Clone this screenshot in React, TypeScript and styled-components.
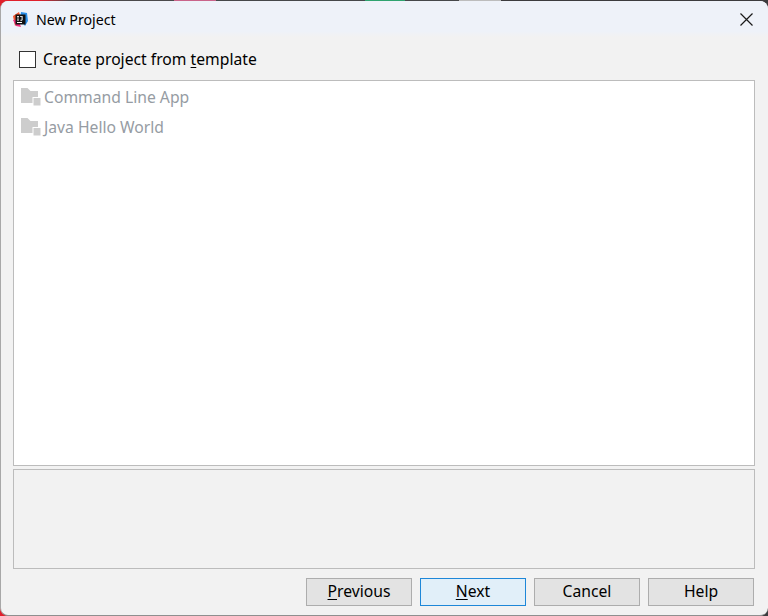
import { createGlobalStyle } from "styled-components";
import styled from "styled-components";

const Global = createGlobalStyle`
  html, body {
    margin: 0;
    padding: 0;
    background: #3a3a3c;
  }
`;

const Desktop = styled.div`
  width: 768px;
  height: 616px;
  overflow: hidden;
  background: linear-gradient(
    to right,
    #e0202c 0,
    #e0202c 40px,
    #4a4a4c 70px,
    #4a4a4c 174px,
    #c9648a 174px,
    #c9648a 216px,
    #46484a 216px,
    #46484a 365px,
    #2fa36f 365px,
    #2fa36f 405px,
    #46484a 405px,
    #46484a 459px,
    #bdbdbd 459px,
    #bdbdbd 501px,
    #3c3c3e 501px
  );
`;

const Window = styled.div`
  box-sizing: border-box;
  width: 768px;
  height: 615px;
  margin-top: 1px;
  background: #f2f2f2;
  border-left: 1px solid #a8a8a8;
  border-bottom: 1px solid #8f8f8f;
  border-radius: 8px;
  display: flex;
  flex-direction: column;
  overflow: hidden;
  font-family: "Noto Sans", "Open Sans", sans-serif;
  color: #000;
`;

const TitleBar = styled.div`
  height: 36px;
  flex: none;
  display: flex;
  align-items: center;
  padding: 0 15px 1px 11px;
  background: linear-gradient(to bottom, #eef2f9 0, #eef2f9 30px, #f2f2f2 36px);
`;

const Title = styled.span`
  margin-left: 7px;
  font-size: 14.2px;
  flex: 1;
`;

const Body = styled.div`
  flex: 1;
  display: flex;
  flex-direction: column;
  padding: 0 13px 9px 12px;
`;

const TemplateRow = styled.label`
  height: 42px;
  flex: none;
  display: flex;
  align-items: center;
  padding-left: 6px;
  box-sizing: border-box;
  gap: 7px;
  font-size: 15.7px;
`;

const Box = styled.span`
  box-sizing: border-box;
  width: 17px;
  height: 17px;
  border: 1px solid #333;
  background: #fff;
`;

const Mnemonic = styled.span`
  text-decoration: underline;
  text-underline-offset: 2px;
  text-decoration-thickness: 1px;
`;

const TemplateList = styled.div`
  box-sizing: border-box;
  height: 386px;
  flex: none;
  background: #fff;
  border: 1px solid #bcbcbc;
  padding: 1px 7px;
`;

const TemplateItem = styled.div`
  height: 30px;
  display: flex;
  align-items: center;
  gap: 3px;
  font-size: 15.7px;
  color: #969ca3;
`;

const Description = styled.div`
  box-sizing: border-box;
  height: 100px;
  flex: none;
  margin-top: 3px;
  background: #f2f2f2;
  border: 1px solid #bcbcbc;
`;

const Footer = styled.div`
  display: flex;
  justify-content: flex-end;
  gap: 8px;
  margin-top: 9px;
  padding-right: 1px;
`;

const Button = styled.button<{ $primary?: boolean }>`
  box-sizing: border-box;
  width: 106px;
  height: 28px;
  padding: 0 0 2px;
  font-family: inherit;
  font-size: 15.7px;
  color: #000;
  background: ${(p) => (p.$primary ? "#e1eff9" : "#e3e3e3")};
  border: 1px solid ${(p) => (p.$primary ? "#1e87d8" : "#adadad")};
`;

const AppIcon = () => (
  <svg width="17" height="17" viewBox="0 0 17 17">
    <path d="M1 5 L7 1 L9 8 L3 15 Z" fill="#f5562f" />
    <path d="M1 9 L4 15 L9 16 L6 8 Z" fill="#f0317e" />
    <path d="M9 1 L15 2 L16 10 L13 15 L8 8 Z" fill="#2b8fe8" />
    <rect x="3.5" y="3.5" width="10" height="10" fill="#111" />
    <rect x="5" y="11" width="5" height="1" fill="#fff" />
    <path d="M5 5h2v.8h-.6v3h.6v.8H5v-.8h.6v-3H5zM8 5h2.6v4l-.8.7H8.4v-.9h1.2V5.8H8z" fill="#fff" />
  </svg>
);

const CloseIcon = () => (
  <svg width="13" height="13" viewBox="0 0 13 13">
    <path d="M.5.5l12 12M12.5.5l-12 12" stroke="#1a1a1a" strokeWidth="1.2" fill="none" />
  </svg>
);

const FolderIcon = () => (
  <svg width="20" height="18" viewBox="0 0 20 18">
    <path d="M0 0h6.5l3 3H17v6h-5.5v6H0z" fill="#cdcdcd" />
    <rect x="12.5" y="10" width="7" height="7.5" fill="#cdcdcd" />
  </svg>
);

const App = () => {
  return (
    <Desktop>
      <Global />
      <Window>
        <TitleBar>
          <AppIcon />
          <Title>New Project</Title>
          <CloseIcon />
        </TitleBar>
        <Body>
          <TemplateRow>
            <Box />
            <span>
              Create project from <Mnemonic>t</Mnemonic>emplate
            </span>
          </TemplateRow>
          <TemplateList>
            <TemplateItem>
              <FolderIcon />
              Command Line App
            </TemplateItem>
            <TemplateItem>
              <FolderIcon />
              Java Hello World
            </TemplateItem>
          </TemplateList>
          <Description />
          <Footer>
            <Button>
              <Mnemonic>P</Mnemonic>revious
            </Button>
            <Button $primary>
              <Mnemonic>N</Mnemonic>ext
            </Button>
            <Button>Cancel</Button>
            <Button>Help</Button>
          </Footer>
        </Body>
      </Window>
    </Desktop>
  );
};

export default App;
